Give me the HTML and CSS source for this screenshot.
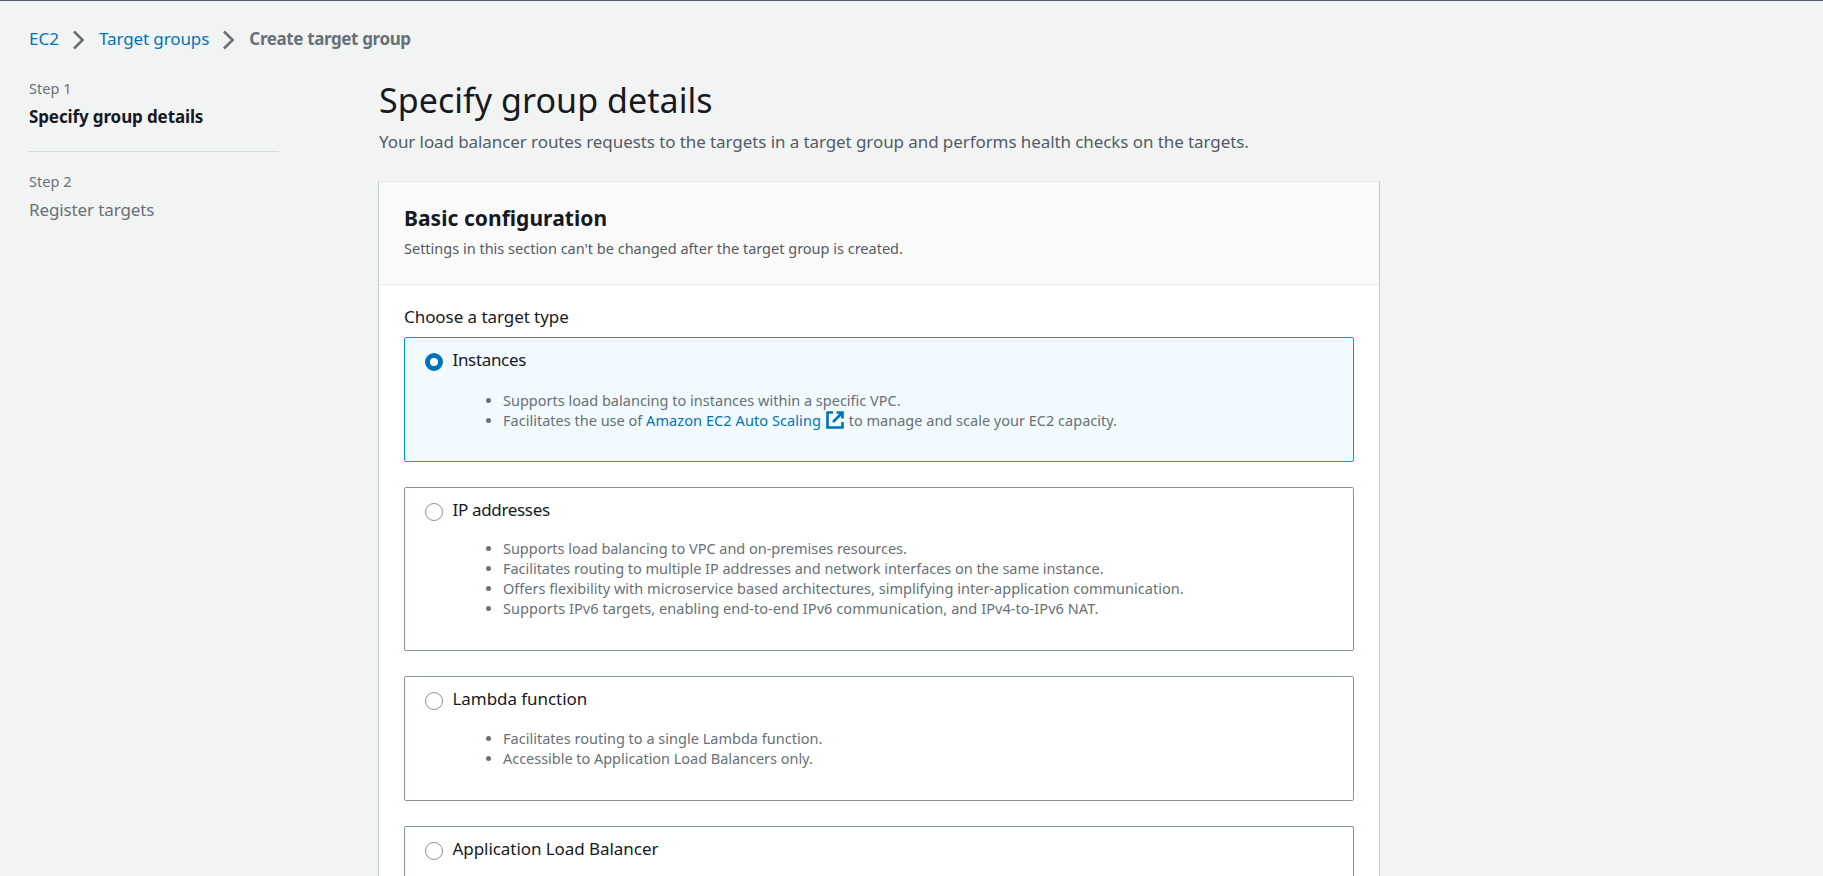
FILE: index.html
```html
<!DOCTYPE html>
<html lang="en">
<head>
<meta charset="utf-8">
<title>Create target group</title>
<link rel="stylesheet" href="styles.css">
</head>
<body>
<div class="page">
  <nav class="breadcrumb">
    <a class="crumb crumb-short" href="#">EC2</a>
    <svg class="chevron" viewBox="0 0 12 20"><path d="M1 1.5 9.6 10 1 18.5"/></svg>
    <a class="crumb" href="#">Target groups</a>
    <svg class="chevron" viewBox="0 0 12 20"><path d="M1 1.5 9.6 10 1 18.5"/></svg>
    <span class="crumb crumb-current">Create target group</span>
  </nav>
  <div class="columns">
    <aside class="steps">
      <div class="step">
        <div class="step-number">Step 1</div>
        <div class="step-name step-active">Specify group details</div>
      </div>
      <div class="step">
        <div class="step-number">Step 2</div>
        <div class="step-name">Register targets</div>
      </div>
    </aside>
    <main class="main">
      <h1 class="title">Specify group details</h1>
      <p class="lead">Your load balancer routes requests to the targets in a target group and performs health checks on the targets.</p>
      <section class="card">
        <header class="card-header">
          <h2 class="card-title">Basic configuration</h2>
          <p class="card-note">Settings in this section can't be changed after the target group is created.</p>
        </header>
        <div class="card-body">
          <div class="field-label">Choose a target type</div>
          <div class="options">
            <div class="option option-selected">
              <div class="option-head"><span class="radio radio-on"></span><span class="option-name tight">Instances</span></div>
              <ul class="option-list">
                <li>Supports load balancing to instances within a specific VPC.</li>
                <li>Facilitates the use of <a class="link" href="#">Amazon EC2 Auto Scaling<svg class="external" viewBox="0 0 18 18"><path d="M7 1.5H1.5v15h15V11M10.5 1.5h6v6M16 2 7 11"/></svg></a> to manage and scale your EC2 capacity.</li>
              </ul>
            </div>
            <div class="option option-tall">
              <div class="option-head"><span class="radio"></span><span class="option-name tight">IP addresses</span></div>
              <ul class="option-list">
                <li class="snug">Supports load balancing to VPC and on-premises resources.</li>
                <li class="snug">Facilitates routing to multiple IP addresses and network interfaces on the same instance.</li>
                <li>Offers flexibility with microservice based architectures, simplifying inter-application communication.</li>
                <li class="loose">Supports IPv6 targets, enabling end-to-end IPv6 communication, and IPv4-to-IPv6 NAT.</li>
              </ul>
            </div>
            <div class="option">
              <div class="option-head"><span class="radio"></span><span class="option-name">Lambda function</span></div>
              <ul class="option-list">
                <li>Facilitates routing to a single Lambda function.</li>
                <li class="snug">Accessible to Application Load Balancers only.</li>
              </ul>
            </div>
            <div class="option option-cut">
              <div class="option-head"><span class="radio"></span><span class="option-name">Application Load Balancer</span></div>
            </div>
          </div>
        </div>
      </section>
    </main>
  </div>
</div>
</body>
</html>
```
FILE: styles.css
```css
* { box-sizing: border-box; }

body {
  margin: 0;
  background: #f2f4f4;
  color: #16191f;
  font: 400 17px/22px "Noto Sans", "Open Sans", sans-serif;
  letter-spacing: -0.06px;
}

h1, h2, p, ul { margin: 0; padding: 0; }

a { color: #0073bb; text-decoration: none; }

.page {
  height: 876px;
  overflow: hidden;
  border-top: 1px solid #545b6b;
  padding: 26px 29px 0;
}

.breadcrumb {
  display: flex;
  align-items: center;
  height: 24px;
}

.crumb { letter-spacing: -0.12px; white-space: nowrap; }
.crumb-short { letter-spacing: 0; }

.crumb-current {
  color: #687078;
  font-weight: 700;
  letter-spacing: -0.38px;
}

.chevron {
  width: 12px;
  height: 20px;
  margin: 2px 14.5px 0 13.7px;
  fill: none;
  stroke: #687078;
  stroke-width: 2.6;
}

.columns {
  display: flex;
  gap: 99px;
  padding-top: 27px;
}

.steps { width: 250px; flex: none; }

.step + .step {
  margin-top: 23px;
  padding-top: 19px;
  border-top: 1px solid #d5dbdb;
}

.step-number {
  font-size: 14.5px;
  line-height: 20px;
  letter-spacing: 0.05px;
  color: #687078;
}

.step-name {
  margin-top: 8px;
  color: #687078;
  letter-spacing: -0.12px;
}

.step-active { color: #16191f; font-weight: 700; }

.main { width: 1002px; flex: none; }

.title {
  padding-left: 1px;
  font-size: 34px;
  line-height: 44px;
  font-weight: 400;
  letter-spacing: 0.05px;
}

.lead {
  margin: 9px 0 28px;
  padding-left: 1px;
  color: #545b64;
  letter-spacing: -0.085px;
}

.card {
  background: #fff;
  border: 1px solid #c3cacb;
  border-top-color: #e6e9e9;
  border-bottom: 0;
}

.card-header {
  height: 103px;
  padding: 22px 25px 0;
  background: #fafafa;
  border-bottom: 1px solid #e6e9e9;
}

.card-title {
  font-size: 21px;
  line-height: 28px;
  font-weight: 700;
  letter-spacing: 0.04px;
}

.card-note {
  margin-top: 6px;
  font-size: 14.5px;
  line-height: 20px;
  letter-spacing: 0;
  color: #545b64;
}

.card-body { padding: 21px 25px 0; }

.field-label { margin-bottom: 9px; }

.options { display: grid; gap: 25px; }

.option {
  height: 125px;
  padding: 11px 20px 0;
  border: 1px solid #879596;
  border-radius: 2px;
}

.option-tall { height: 164px; }

.option-cut {
  height: 50px;
  border-bottom: 0;
  border-radius: 2px 2px 0 0;
}

.option-selected {
  background: #f1faff;
  border-color: #00a1c9;
}

.option-head {
  display: flex;
  align-items: flex-start;
  gap: 9.5px;
}

.tight { letter-spacing: -0.33px; }

.radio {
  width: 18px;
  height: 18px;
  margin-top: 4px;
  border: 1px solid #879596;
  border-radius: 50%;
  background: #fff;
}

.radio-on { border: 5px solid #0073bb; }

.option-list {
  margin-top: 18px;
  padding-left: 78px;
  list-style: none;
  color: #687078;
  font-size: 14.5px;
  line-height: 20px;
  letter-spacing: 0.01px;
}

.option-selected .option-list { margin-top: 19px; }
.option-tall .option-list { margin-top: 17px; }

.option-list li { display: flex; align-items: center; height: 20px; white-space: pre; }

.option-list li::before {
  content: "";
  width: 5px;
  height: 5px;
  margin: 0 12px 0 -17px;
  border-radius: 50%;
  background: #687078;
}

.option-list .snug { letter-spacing: -0.03px; }
.option-list .loose { letter-spacing: 0.06px; }

.link {
  display: flex;
  align-items: center;
  letter-spacing: 0.08px;
}

.external {
  width: 18px;
  height: 18px;
  margin: 0 1px 0 5px;
  fill: none;
  stroke: #0073bb;
  stroke-width: 2.6;
}
```
